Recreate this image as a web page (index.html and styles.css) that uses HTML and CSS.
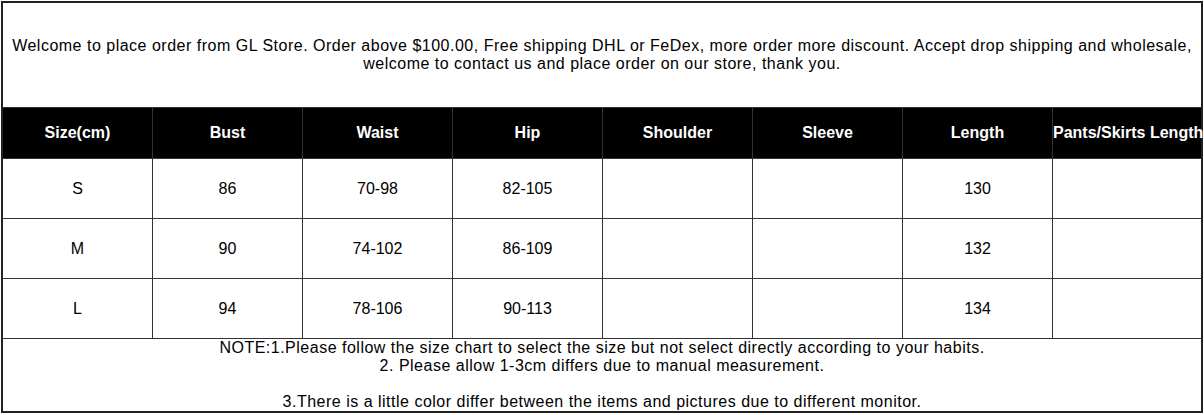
FILE: index.html
```html
<!DOCTYPE html>
<html>
<head>
<meta charset="utf-8">
<link rel="stylesheet" href="styles.css">
</head>
<body>
<table class="chart">
  <colgroup>
    <col class="c"><col class="c"><col class="c"><col class="c"><col class="c"><col class="c"><col class="c"><col class="c-last">
  </colgroup>
  <tr class="intro-row">
    <td colspan="8" class="intro last">Welcome to place order from GL Store. Order above $100.00, Free shipping DHL or FeDex, more order more discount. Accept drop shipping and wholesale,<br>welcome to contact us and place order on our store, thank you.</td>
  </tr>
  <tr class="head-row">
    <th>Size(cm)</th><th>Bust</th><th>Waist</th><th>Hip</th><th>Shoulder</th><th>Sleeve</th><th>Length</th><th class="last wide">Pants/Skirts Length</th>
  </tr>
  <tr class="data-row">
    <td>S</td><td>86</td><td>70-98</td><td>82-105</td><td></td><td></td><td>130</td><td class="last"></td>
  </tr>
  <tr class="data-row">
    <td>M</td><td>90</td><td>74-102</td><td>86-109</td><td></td><td></td><td>132</td><td class="last"></td>
  </tr>
  <tr class="data-row">
    <td>L</td><td>94</td><td>78-106</td><td>90-113</td><td></td><td></td><td>134</td><td class="last"></td>
  </tr>
  <tr class="note-row">
    <td colspan="8" class="note last">NOTE:1.Please follow the size chart to select the size but not select directly according to your habits.<br>2. Please allow 1-3cm differs due to manual measurement.<br><br>3.There is a little color differ between the items and pictures due to different monitor.</td>
  </tr>
</table>
</body>
</html>
```

FILE: styles.css
```css
html, body {
  margin: 0;
  padding: 0;
  background: #fff;
}
body {
  padding: 1px;
  font-family: "Liberation Sans", Arial, sans-serif;
  color: #000;
}
.chart {
  border-collapse: separate;
  border-spacing: 0;
  border: 2px solid #222;
  width: 1202px;
  table-layout: fixed;
  font-size: 16px;
  line-height: 18px;
}
.c { width: 150px; }
.c-last { width: 148px; }
.chart td, .chart th {
  padding: 0;
  text-align: center;
  vertical-align: middle;
  border-right: 1px solid #333;
  border-bottom: 1px solid #333;
}
.chart .last { border-right: none; }
.note-row td { border-bottom: none; }
.intro {
  height: 104px;
  padding-top: 36px;
  vertical-align: top;
  letter-spacing: 0.5px;
}
.head-row th {
  height: 50px;
  background: #000;
  color: #fff;
  font-weight: bold;
}
.wide { white-space: nowrap; overflow: visible; }
.data-row td { height: 59px; }
.note {
  height: 72px;
  vertical-align: top;
  line-height: 18px;
  padding-top: 0;
  letter-spacing: 0.5px;
}
```
